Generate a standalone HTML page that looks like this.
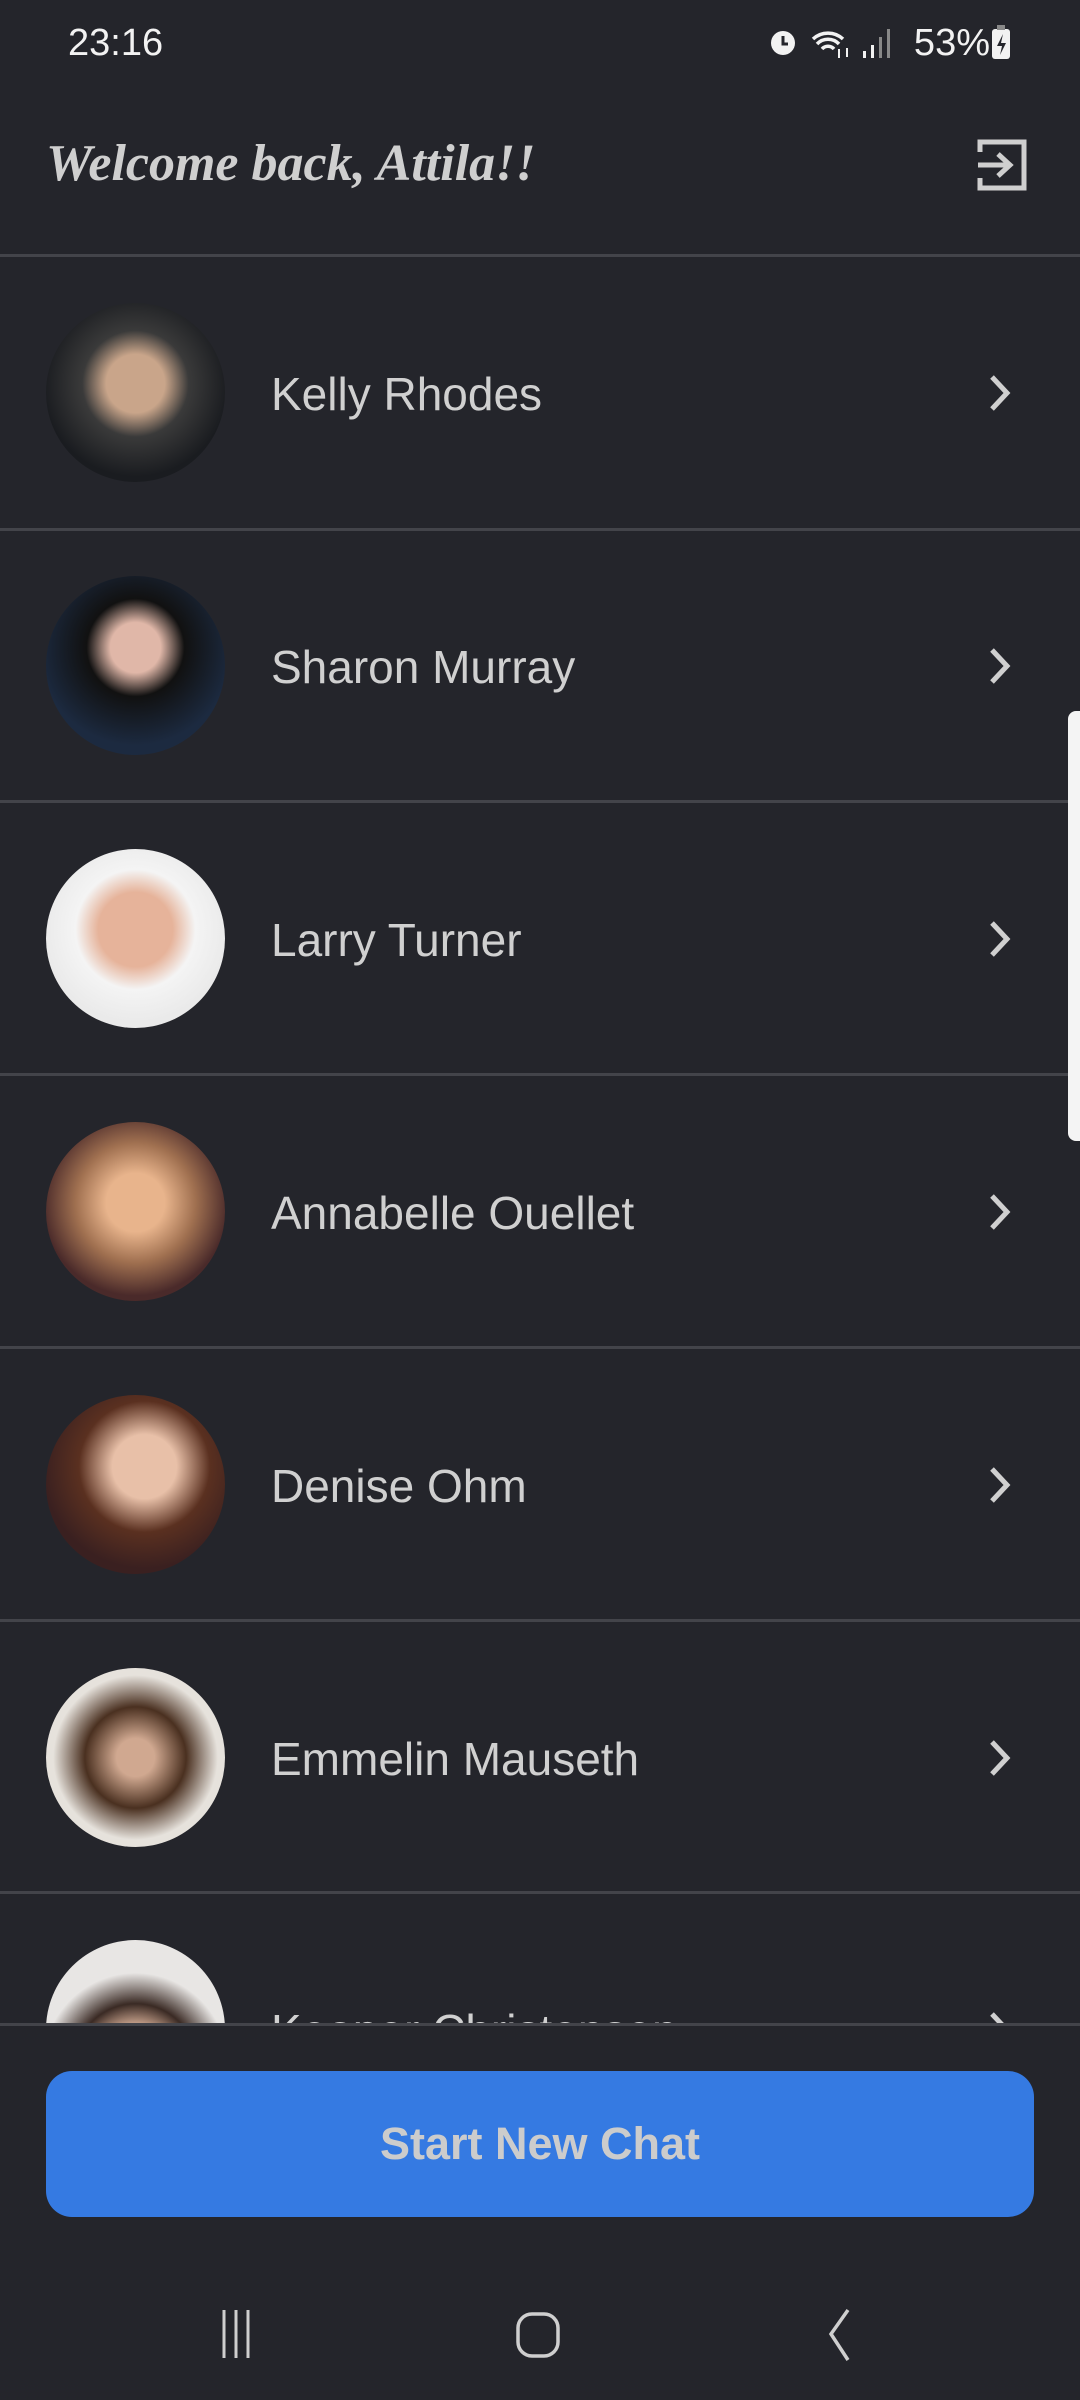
<!DOCTYPE html>
<html><head><meta charset="utf-8"><style>
*{margin:0;padding:0;box-sizing:border-box}
body{width:1080px;height:2400px;background:#24252b;position:relative;overflow:hidden;font-family:"Liberation Sans",sans-serif}
.abs{position:absolute}
.time{left:68px;top:22px;color:#f2f2f2;font-size:38px}
.stat{right:68px;top:22px;color:#f2f2f2;font-size:38px}
.title{left:46px;top:134px;color:#cfcfcf;font-family:"Liberation Serif",serif;font-weight:bold;font-style:italic;font-size:52px;letter-spacing:0px}
.sep{left:0;width:1080px;height:3px;background:#43444a}
.row{left:0;width:1080px;height:272px}
.av{position:absolute;left:46px;width:179px;height:179px;border-radius:50%;top:46px;overflow:hidden}
.name{position:absolute;left:271px;top:110px;font-size:46px;color:#d0d0d0}
.chev{position:absolute;left:988px;top:116px}
.btn{left:46px;top:2071px;width:988px;height:146px;border-radius:26px;background:#357ae2;color:#cccccc;font-size:45px;font-weight:bold;text-align:center;line-height:146px}
</style></head><body>
<div class="abs time">23:16</div>
<div class="abs stat">
<svg width="136" height="36" viewBox="0 0 136 36" style="vertical-align:-4px">
<circle cx="16" cy="20" r="12" fill="#f2f2f2"/><path d="M16 13v8h5" stroke="#24252b" stroke-width="3" fill="none"/>
<path d="M46 16a22 22 0 0 1 30 0M50 21a15 15 0 0 1 22 0M55 26a8 8 0 0 1 12 0" stroke="#f2f2f2" stroke-width="3.5" fill="none"/>
<path d="M72 26v9M80 34v-9" stroke="#f2f2f2" stroke-width="2"/>
<rect x="96" y="28" width="3" height="7" fill="#f2f2f2"/><rect x="104" y="22" width="3" height="13" fill="#f2f2f2"/><rect x="112" y="14" width="3" height="21" fill="#888"/><rect x="120" y="6" width="3" height="29" fill="#888"/>
</svg> 53%<svg width="22" height="34" viewBox="0 0 22 34" style="vertical-align:-4px"><rect x="2" y="4" width="18" height="30" rx="3" fill="#f2f2f2"/><rect x="7" y="0" width="8" height="5" fill="#888"/><path d="M13 9l-6 12h5l-2 9 6-12h-5z" fill="#24252b"/></svg></div>
<div class="abs title">Welcome back, Attila!!</div>
<svg class="abs" style="left:976px;top:138px" width="52" height="54" viewBox="0 0 52 54"><path d="M4 14V4h44v46H4V40" stroke="#cfcfcf" stroke-width="5" fill="none"/><path d="M2 27h30M22 16l12 11-12 11" stroke="#cfcfcf" stroke-width="5" fill="none"/></svg>
<div class="abs sep" style="top:254px"></div>

<div class="abs row" style="top:257px"><div class="av" style="background:radial-gradient(circle at 50% 45%,#c9a58a 0 22%,#3a3a3a 40%,#1a1c20 70%)"></div><div class="name">Kelly Rhodes</div><svg class="chev" width="24" height="40"><path d="M4 4l15 16-15 16" stroke="#d0d0d0" stroke-width="5" fill="none"/></svg></div>
<div class="abs sep" style="top:528px"></div>
<div class="abs row" style="top:530px"><div class="av" style="background:radial-gradient(circle at 50% 40%,#e0b7a8 0 18%,#111 35%,#1c2a40 70%)"></div><div class="name">Sharon Murray</div><svg class="chev" width="24" height="40"><path d="M4 4l15 16-15 16" stroke="#d0d0d0" stroke-width="5" fill="none"/></svg></div>
<div class="abs sep" style="top:800px"></div>
<div class="abs row" style="top:803px"><div class="av" style="background:radial-gradient(circle at 50% 45%,#e6b39a 0 28%,#f4f4f4 45%,#eaeaea 70%)"></div><div class="name">Larry Turner</div><svg class="chev" width="24" height="40"><path d="M4 4l15 16-15 16" stroke="#d0d0d0" stroke-width="5" fill="none"/></svg></div>
<div class="abs sep" style="top:1073px"></div>
<div class="abs row" style="top:1076px"><div class="av" style="background:radial-gradient(circle at 50% 45%,#e8b48c 0 22%,#a07050 45%,#4a2a2a 70%)"></div><div class="name">Annabelle Ouellet</div><svg class="chev" width="24" height="40"><path d="M4 4l15 16-15 16" stroke="#d0d0d0" stroke-width="5" fill="none"/></svg></div>
<div class="abs sep" style="top:1346px"></div>
<div class="abs row" style="top:1349px"><div class="av" style="background:radial-gradient(circle at 55% 40%,#e8c0a8 0 22%,#5a3020 45%,#3a2020 70%)"></div><div class="name">Denise Ohm</div><svg class="chev" width="24" height="40"><path d="M4 4l15 16-15 16" stroke="#d0d0d0" stroke-width="5" fill="none"/></svg></div>
<div class="abs sep" style="top:1619px"></div>
<div class="abs row" style="top:1622px"><div class="av" style="background:radial-gradient(circle at 50% 50%,#d0a890 0 15%,#4a3020 40%,#e6e2dc 65%)"></div><div class="name">Emmelin Mauseth</div><svg class="chev" width="24" height="40"><path d="M4 4l15 16-15 16" stroke="#d0d0d0" stroke-width="5" fill="none"/></svg></div>
<div class="abs sep" style="top:1891px"></div>
<div class="abs" style="top:1894px;left:0;width:1080px;height:129px;overflow:hidden"><div class="av" style="background:radial-gradient(circle at 50% 70%,#d8b098 0 25%,#3a2a24 40%,#e8e6e4 60%)"></div><div class="name">Keoper Christensen</div><svg class="chev" width="24" height="40" style="top:116px"><path d="M4 4l15 16-15 16" stroke="#d0d0d0" stroke-width="5" fill="none"/></svg></div>
<div class="abs sep" style="top:2023px"></div>
<div class="abs" style="left:1068px;top:711px;width:14px;height:430px;border-radius:8px 0 0 8px;background:#f4f4f4"></div>
<div class="abs btn">Start New Chat</div>
<svg class="abs" style="left:200px;top:2300px" width="700" height="70" viewBox="0 0 700 70">
<path d="M17 10v48M29 10v48M41 10v48" stroke="#cfcfcf" stroke-width="3" transform="translate(7 0)"/>
<rect x="318" y="14" width="40" height="42" rx="14" stroke="#cfcfcf" stroke-width="3.5" fill="none"/>
<path d="M648 10l-17 24 17 26" stroke="#cfcfcf" stroke-width="3.5" fill="none"/>
</svg>
</body></html>
